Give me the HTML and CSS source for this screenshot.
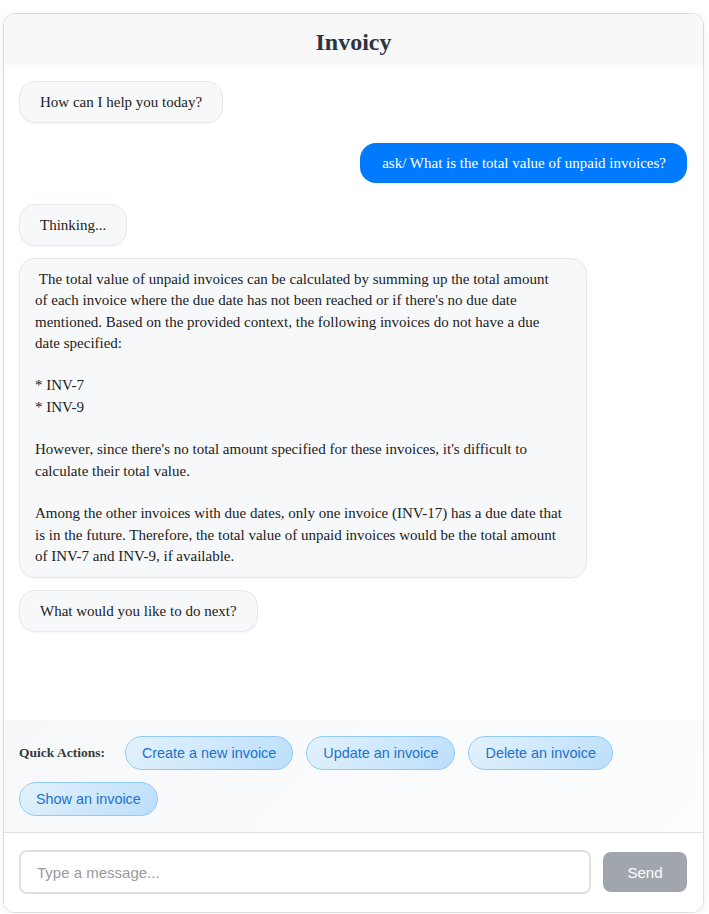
FILE: index.html
```html
<!DOCTYPE html>
<html lang="en">
<head>
<meta charset="utf-8">
<title>Invoicy</title>
<link rel="stylesheet" href="styles.css">
</head>
<body>
<div class="chat">
  <header class="chat-header"><h1 class="title">Invoicy</h1></header>
  <div class="messages">
    <div class="msg bot"><div class="bubble">How can I help you today?</div></div>
    <div class="msg user"><div class="bubble">ask/ What is the total value of unpaid invoices?</div></div>
    <div class="msg bot"><div class="bubble">Thinking...</div></div>
    <div class="msg bot"><div class="bubble long"> The total value of unpaid invoices can be calculated by summing up the total amount
of each invoice where the due date has not been reached or if there's no due date
mentioned. Based on the provided context, the following invoices do not have a due
date specified:

* INV-7
* INV-9

However, since there's no total amount specified for these invoices, it's difficult to calculate their total value.

Among the other invoices with due dates, only one invoice (INV-17) has a due date that is in the future. Therefore, the total value of unpaid invoices would be the total amount of INV-7 and INV-9, if available.</div></div>
    <div class="msg bot"><div class="bubble">What would you like to do next?</div></div>
  </div>
  <div class="quick-actions">
    <span class="qa-label">Quick Actions:</span>
    <button class="qa-btn">Create a new invoice</button>
    <button class="qa-btn">Update an invoice</button>
    <button class="qa-btn">Delete an invoice</button>
    <button class="qa-btn">Show an invoice</button>
  </div>
  <div class="composer">
    <input class="composer-input" type="text" placeholder="Type a message...">
    <button class="send-btn">Send</button>
  </div>
</div>
</body>
</html>
```
FILE: styles.css
```css
* { box-sizing: border-box; }

html, body {
  margin: 0;
  padding: 0;
  background: #ffffff;
}

body {
  font-family: "Liberation Serif", "Times New Roman", serif;
  color: #222;
  padding-top: 13px;
}

.chat {
  width: 701px;
  height: 900px;
  margin-left: 3px;
  border: 1px solid #dcdcdc;
  border-radius: 12px;
  box-shadow: 0 2px 8px rgba(0, 0, 0, 0.06);
  display: flex;
  flex-direction: column;
  overflow: hidden;
  background: #fff;
}

.chat-header {
  background: #f8f8f8;
  padding: 13px 0 8px;
  text-align: center;
}

.title {
  margin: 0;
  font-size: 24px;
  font-weight: bold;
  color: #2c3440;
  line-height: 30px;
}

.messages {
  flex: 1;
  padding: 16px 16px 16px 15px;
  display: flex;
  flex-direction: column;
}

.msg {
  display: flex;
  margin-bottom: 12px;
}

.msg.user {
  justify-content: flex-end;
  margin-top: 8px;
  margin-bottom: 21px;
}

.bubble {
  font-size: 15px;
  line-height: 20px;
  padding: 10px 20px;
  border-radius: 16px;
  background: #f7f8fa;
  border: 1px solid #e6e8ec;
  box-shadow: 0 1px 2px rgba(0, 0, 0, 0.04);
  color: #222;
}

.msg.user .bubble {
  background: #007bff;
  border: none;
  color: #fff;
  padding: 10px 21px 10px 22px;
}

.bubble.long {
  box-sizing: content-box;
  max-width: 536px;
  padding: 10px 15px;
  line-height: 21.3px;
  white-space: pre-wrap;
}

.quick-actions {
  background: linear-gradient(135deg, #f6f8fa 0%, #fcfdfd 100%);
  padding: 16px 16px 16px 15px;
  display: flex;
  flex-wrap: wrap;
  align-items: center;
  gap: 12px 13px;
}

.qa-label {
  font-size: 13.5px;
  font-weight: bold;
  color: #3a3a3a;
  margin-right: 7px;
}

.qa-btn {
  font-family: "Liberation Sans", Arial, sans-serif;
  font-size: 14.4px;
  line-height: 16px;
  padding: 8px 16px;
  color: #1f72c8;
  background: linear-gradient(135deg, #e3f2fd 0%, #bbdefb 100%);
  border: 1px solid #90caf9;
  border-radius: 20px;
  cursor: pointer;
}

.composer {
  border-top: 1px solid #e0e0e0;
  padding: 17px 16px 18px 15px;
  display: flex;
  align-items: center;
  gap: 12px;
  background: #fff;
}

.composer-input {
  flex: 1;
  height: 44px;
  border: 2px solid #e0e0e0;
  border-radius: 8px;
  padding: 0 16px;
  font-family: "Liberation Sans", Arial, sans-serif;
  font-size: 15px;
  color: #333;
  outline: none;
}

.composer-input::placeholder {
  color: #9a9a9a;
}

.send-btn {
  height: 40px;
  width: 84px;
  border: none;
  border-radius: 8px;
  background: #a1a6ad;
  color: #fff;
  font-family: "Liberation Sans", Arial, sans-serif;
  font-size: 15px;
}
```
